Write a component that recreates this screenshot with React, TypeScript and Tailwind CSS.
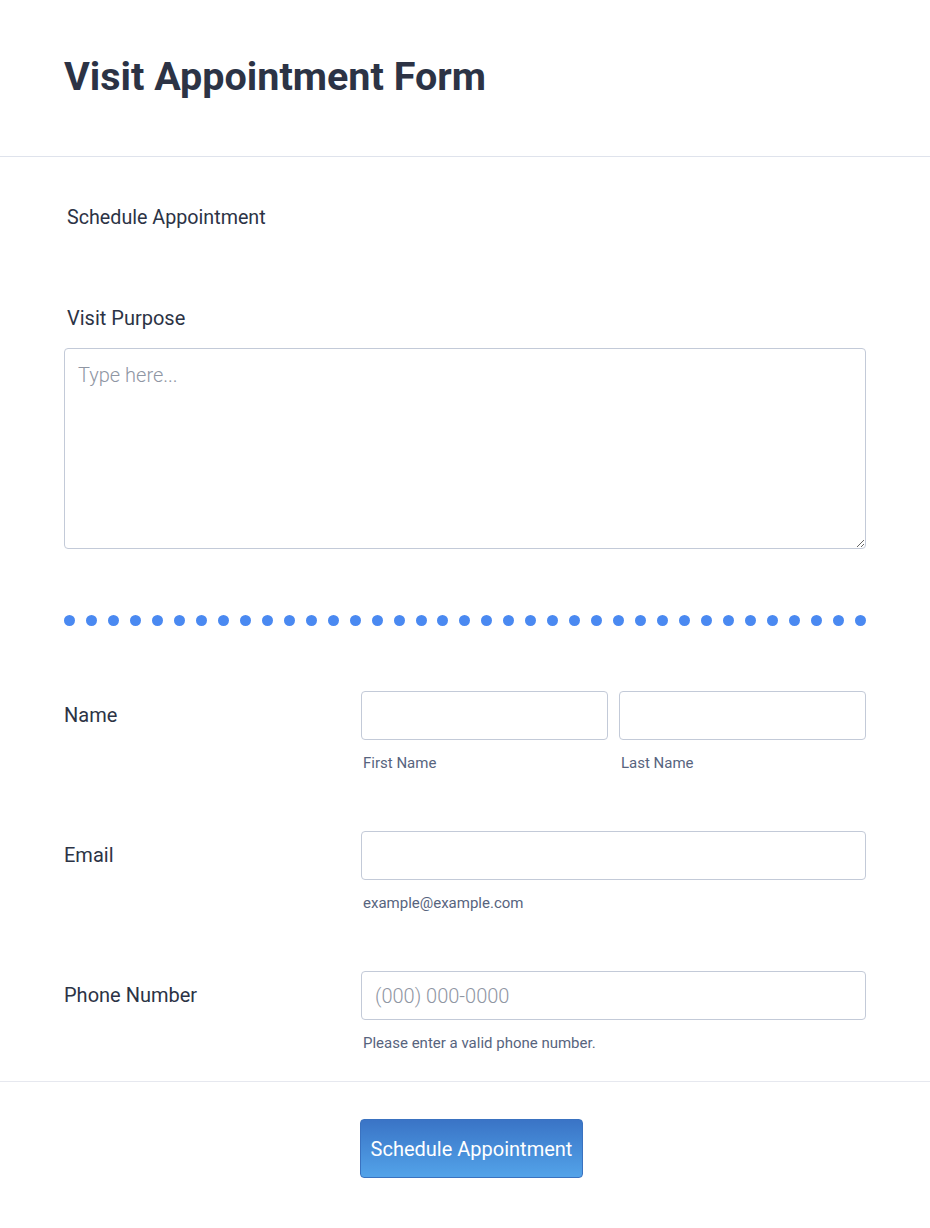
import React from "react";

const DOT_COUNT = 37;

function SubLabel({ children }: { children: React.ReactNode }) {
  return <div className="mt-[13px] pl-[2px] text-[15px] leading-[20px] text-[#57647e]">{children}</div>;
}

function Field({ label, children }: { label: string; children: React.ReactNode }) {
  return (
    <div className="flex">
      <div className="w-[297px] shrink-0 pt-[12px] text-[20px] leading-[24px] text-[#2c3345]">{label}</div>
      <div className="flex-1">{children}</div>
    </div>
  );
}

const inputCls =
  "block w-full h-[49px] rounded-[4px] border border-[#c3cad8] bg-white px-[13px] text-[20px] text-[#2c3345] font-light placeholder:text-[#8f96a3] outline-none";

export default function App() {
  return (
    <div className="min-h-[1228px] bg-white font-['Roboto','Liberation_Sans',sans-serif] text-[#2c3345]">
      {/* Header */}
      <div className="h-[157px] flex items-center px-16 border-b border-[#dfe3ec]">
        <h1 className="text-[39.5px] font-bold leading-[48px] text-[#2c3345] -mt-[2px]">Visit Appointment Form</h1>
      </div>

      <div className="px-16">
        <div className="mt-[49px] pl-[3px] text-[19.7px] leading-[24px]">Schedule Appointment</div>

        <div className="mt-[76px] pl-[3px] text-[20px] leading-[24px]">Visit Purpose</div>
        <textarea
          placeholder="Type here..."
          className="mt-[18px] block w-full h-[201px] rounded-[4px] border border-[#c3cad8] px-[13px] py-[12px] text-[20px] leading-[28px] font-light placeholder:text-[#8f96a3] outline-none"
        />

        {/* Divider dots */}
        <div className="mt-[66px] flex justify-between">
          {Array.from({ length: DOT_COUNT }).map((_, i) => (
            <span key={i} className="block w-[11px] h-[11px] rounded-full bg-[#4a89f1]" />
          ))}
        </div>

        <div className="mt-[65px]">
          <Field label="Name">
            <div className="flex gap-[11px]">
              <div className="flex-1">
                <input className={inputCls} />
                <SubLabel>First Name</SubLabel>
              </div>
              <div className="flex-1">
                <input className={inputCls} />
                <SubLabel>Last Name</SubLabel>
              </div>
            </div>
          </Field>
        </div>

        <div className="mt-[58px]">
          <Field label="Email">
            <input className={inputCls} />
            <SubLabel>example@example.com</SubLabel>
          </Field>
        </div>

        <div className="mt-[58px]">
          <Field label="Phone Number">
            <input className={inputCls} placeholder="(000) 000-0000" />
            <SubLabel>Please enter a valid phone number.</SubLabel>
          </Field>
        </div>
      </div>

      {/* Footer */}
      <div className="mt-[28px] border-t border-[#e6e8ef] flex justify-center pt-[37px]">
        <button className="ml-[13px] h-[59px] px-[10px] rounded-[4px] border border-[#3a72c0] bg-gradient-to-b from-[#3a74c6] to-[#53a3e9] text-white text-[20px] leading-[24px] font-normal">
          Schedule Appointment
        </button>
      </div>
    </div>
  );
}
